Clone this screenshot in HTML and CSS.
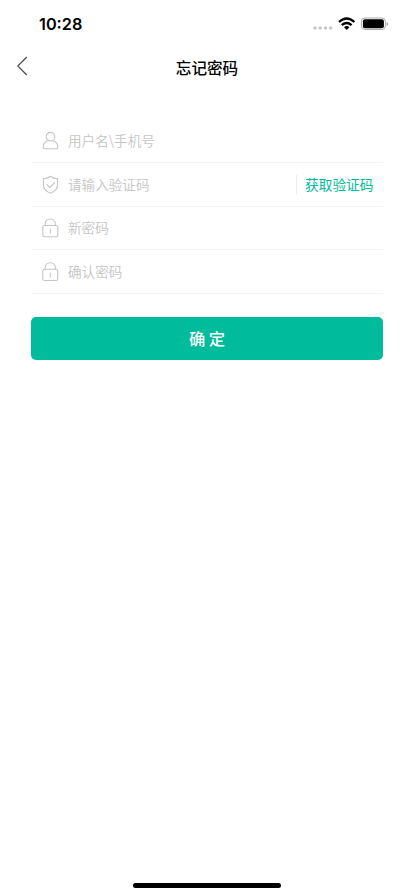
FILE: index.html
```html
<!DOCTYPE html>
<html lang="zh-CN">
<head>
<meta charset="utf-8">
<meta name="viewport" content="width=device-width, initial-scale=1">
<title>忘记密码</title>
<link rel="stylesheet" href="styles.css">
</head>
<body>
<div class="screen">
  <div class="status">
    <span class="time">10:28</span>
    <svg class="indicators" width="76" height="16" viewBox="-.7 0 76 16">
      <g fill="#c8c8c8"><circle cx="2.3" cy="12" r="1.8"/><circle cx="7.5" cy="12" r="1.8"/><circle cx="12.8" cy="12" r="1.8"/><circle cx="18" cy="12" r="1.8"/></g>
      <g fill="none" stroke="#000" stroke-width="2.3"><path d="M26.3 6Q34 -0.9 41.7 6"/><path d="M29.1 9.1Q34 4.8 38.9 9.1"/></g>
      <path d="M31.3 11.2Q34 9 36.7 11.2L34 13.9Z"/>
      <rect x="48.7" y="2" width="24" height="11.5" rx="3.4" fill="none" stroke="#aaa"/>
      <rect x="50.2" y="3.3" width="21" height="8.9" rx="2"/>
      <path d="M74 6v4q1.3-.6 1.3-2t-1.3-2z" fill="#999"/>
    </svg>
  </div>
  <header class="navbar">
    <svg class="back" width="12" height="20" viewBox="0 0 12 20"><path d="M9.8 1 .8 10l9 9" fill="none" stroke="#505050" stroke-width="1.3"/></svg>
    <h1 class="title">忘记密码</h1>
  </header>
  <main class="form">
    <div class="row">
      <svg class="icon" viewBox="0 0 18 20"><circle cx="8.5" cy="5.7" r="4.3"/><path d="M5.5 10.1C2.8 11.1 1.2 13.2 1.2 15.7q0 2.1 2.1 2.1h10.4q2.1 0 2.1-2.1c0-2.5-1.6-4.6-4.3-5.6"/></svg>
      <span class="placeholder">用户名\手机号</span>
    </div>
    <div class="row">
      <svg class="icon" viewBox="0 0 18 20"><path d="M8.5 1.2C6.5 2.8 4.1 3.6 1.4 3.8v6.3c0 3.8 3.1 6.5 7.1 8.2 4-1.7 7.1-4.4 7.1-8.2V3.8C12.9 3.6 10.5 2.8 8.5 1.2Z"/><path d="m4.9 9.6 2.9 2.9 4.8-4.9"/></svg>
      <span class="placeholder">请输入验证码</span>
      <span class="code">获取验证码</span>
    </div>
    <div class="row">
      <svg class="icon" viewBox="0 0 18 20"><rect x=".8" y="7.5" width="15" height="11.3" rx="1.8"/><path d="M3.2 7.5V6.1C3.2 3.1 5.5 1 8.3 1s5.1 2.1 5.1 5.1v1.4M8.3 11.4v3.8"/></svg>
      <span class="placeholder">新密码</span>
    </div>
    <div class="row">
      <svg class="icon" viewBox="0 0 18 20"><rect x=".8" y="7.2" width="15" height="11.3" rx="1.8"/><path d="M3.2 7.2V5.8C3.2 2.8 5.5.7 8.3.7s5.1 2.1 5.1 5.1v1.4M8.3 11.1v3.8"/></svg>
      <span class="placeholder">确认密码</span>
    </div>
    <button class="submit">确 定</button>
  </main>
  <div class="home"></div>
</div>
</body>
</html>
```
FILE: styles.css
```css
* { box-sizing: border-box; }
body { margin: 0; background: #fff; font-family: "Noto Sans CJK SC", sans-serif; }
.screen { height: 896px; display: flex; flex-direction: column; overflow: hidden; }
.status { height: 44px; display: flex; justify-content: space-between; align-items: flex-start; padding: 14px 26px 0 39px; }
.time { font: 600 16.3px/20px Inter, sans-serif; color: #000; }
.indicators { margin-top: 2px; overflow: visible; }
.navbar { height: 44px; display: grid; grid-template-columns: 60px 1fr 60px; align-items: center; }
.back { margin-left: 17px; }
.title { margin: 1px 0 0; text-align: center; font-size: 15.6px; line-height: 24px; font-weight: 500; color: #000; }
.form { flex: 1; margin: 31px 31px 0; }
.row { height: 43.6px; display: flex; align-items: center; padding-left: 11px; border-bottom: 1px solid #f4f4f4; }
.row:nth-child(2) { height: 44px; }
.row:nth-child(3) { padding-bottom: 1px; }
.icon { width: 18px; height: 20px; margin-top: 2px; fill: none; stroke: #c5c5c5; stroke-width: 1.1; stroke-linecap: round; stroke-linejoin: round; }
.placeholder { margin-left: 8px; font-size: 13.6px; line-height: 20px; font-weight: 350; color: #c5c5c5; }
.code { margin-left: auto; padding: 0 9.5px 0 8.5px; border-left: 1px solid #ececec; font-size: 13.7px; line-height: 19px; color: #00bb9c; }
.submit { display: block; width: 100%; height: 43.5px; margin-top: 23px; padding: 0 0 2px; border: 0; border-radius: 5px; background: #00bb9c; color: #fff; font: 500 16.3px/24px "Noto Sans CJK SC", sans-serif; }
.home { width: 148px; height: 5px; margin: 0 auto 8px; border-radius: 3px; background: #000; }
```
